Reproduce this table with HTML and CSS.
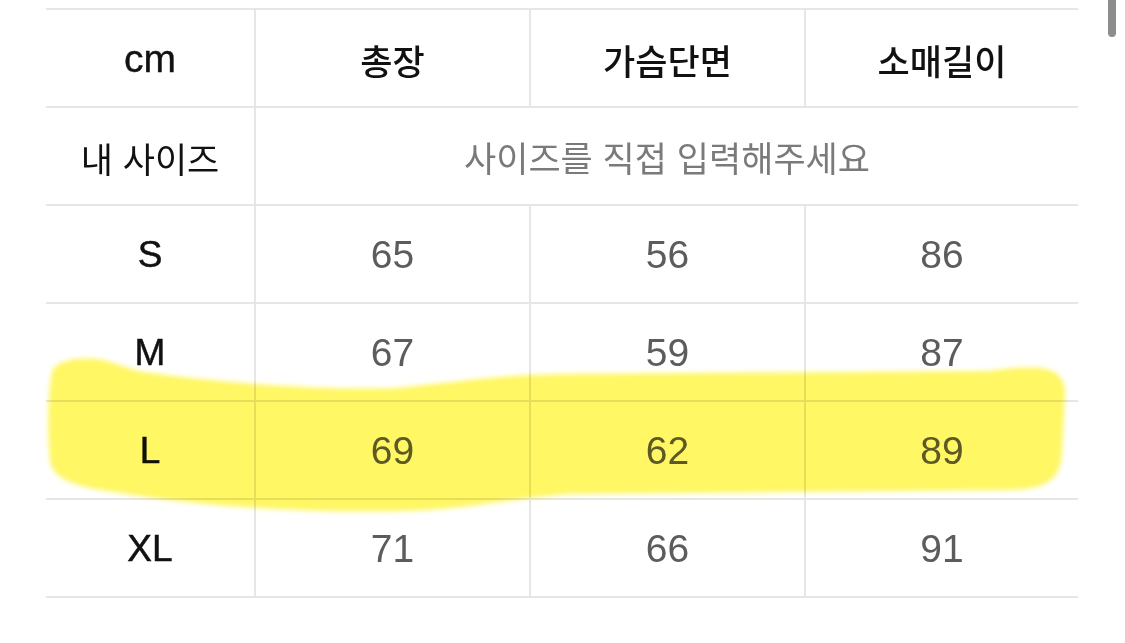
FILE: index.html
```html
<!DOCTYPE html>
<html lang="ko">
<head>
<meta charset="utf-8">
<title>사이즈표</title>
<link rel="stylesheet" href="styles.css">
</head>
<body>
<div class="page">
  <div class="size-table">
    <div class="cell head label">cm</div>
    <div class="cell head">총장</div>
    <div class="cell head">가슴단면</div>
    <div class="cell head last">소매길이</div>

    <div class="cell label kr">내 사이즈</div>
    <div class="cell hint span3 last">사이즈를 직접 입력해주세요</div>

    <div class="cell label">S</div>
    <div class="cell num">65</div>
    <div class="cell num">56</div>
    <div class="cell num last">86</div>

    <div class="cell label">M</div>
    <div class="cell num">67</div>
    <div class="cell num">59</div>
    <div class="cell num last">87</div>

    <div class="cell label">L</div>
    <div class="cell num">69</div>
    <div class="cell num">62</div>
    <div class="cell num last">89</div>

    <div class="cell label">XL</div>
    <div class="cell num">71</div>
    <div class="cell num">66</div>
    <div class="cell num last">91</div>
  </div>

  <svg class="highlight" width="1125" height="643" viewBox="0 0 1125 643" aria-hidden="true">
    <defs>
      <filter id="soft" x="-5%" y="-20%" width="110%" height="140%">
        <feGaussianBlur stdDeviation="2.5"/>
      </filter>
    </defs>
    <path filter="url(#soft)" fill="#fff764"
      d="M52,372 C56,360 78,356 104,360 L138,371 C200,381 320,391 396,388 C458,382 500,375 560,374 L990,371 C1040,364 1064,366 1065,392 L1062,455 C1060,478 1048,488 1015,490 L570,494 C505,499 462,510 400,511 C300,513 200,506 120,493 C72,487 52,478 50,460 C47,430 48,395 52,372 Z"/>
  </svg>

  <div class="scrollbar"></div>
</div>
</body>
</html>
```

FILE: styles.css
```css
html, body {
  margin: 0;
  padding: 0;
  background: #ffffff;
}

.page {
  position: relative;
  width: 1125px;
  height: 643px;
  overflow: hidden;
  padding: 8px 0 0 46px;
  box-sizing: border-box;
}

.size-table {
  display: grid;
  grid-template-columns: 210px 275px 275px 272px;
  grid-auto-rows: 98px;
  border-top: 2px solid #e6e6e6;
  width: 1032px;
}

.cell {
  display: flex;
  align-items: center;
  justify-content: center;
  border-bottom: 2px solid #e6e6e6;
  border-right: 2px solid #e6e6e6;
  font-family: "Liberation Sans", "Noto Sans CJK KR", sans-serif;
  font-size: 36px;
  color: #111111;
}

.cell.last {
  border-right: none;
}

.head {
  font-family: "Noto Sans CJK KR", sans-serif;
  font-weight: 500;
  font-size: 35px;
  color: #111111;
  padding-top: 2px;
}

.head.label {
  font-family: "Liberation Sans", sans-serif;
  font-weight: 400;
  font-size: 39px;
  color: #111111;
  -webkit-text-stroke: 0.4px #111111;
}

.label {
  font-family: "Liberation Sans", "Noto Sans CJK KR", sans-serif;
  font-weight: 400;
  font-size: 37px;
  color: #111111;
  -webkit-text-stroke: 0.5px #111111;
  padding-top: 2px;
}

.label.kr {
  font-family: "Noto Sans CJK KR", sans-serif;
  font-weight: 400;
  font-size: 35px;
  -webkit-text-stroke: 0;
}

.hint {
  grid-column: span 3;
  font-family: "Noto Sans CJK KR", sans-serif;
  font-weight: 400;
  font-size: 35px;
  color: #7a7a7a;
}

.num {
  color: #5c5c5c;
  font-size: 39px;
  padding-top: 2px;
}

.highlight {
  position: absolute;
  left: 0;
  top: 0;
  mix-blend-mode: multiply;
  pointer-events: none;
}

.scrollbar {
  position: absolute;
  left: 1108px;
  top: -6px;
  width: 8px;
  height: 43px;
  border-radius: 4px;
  background: #8d8d8d;
}
```
